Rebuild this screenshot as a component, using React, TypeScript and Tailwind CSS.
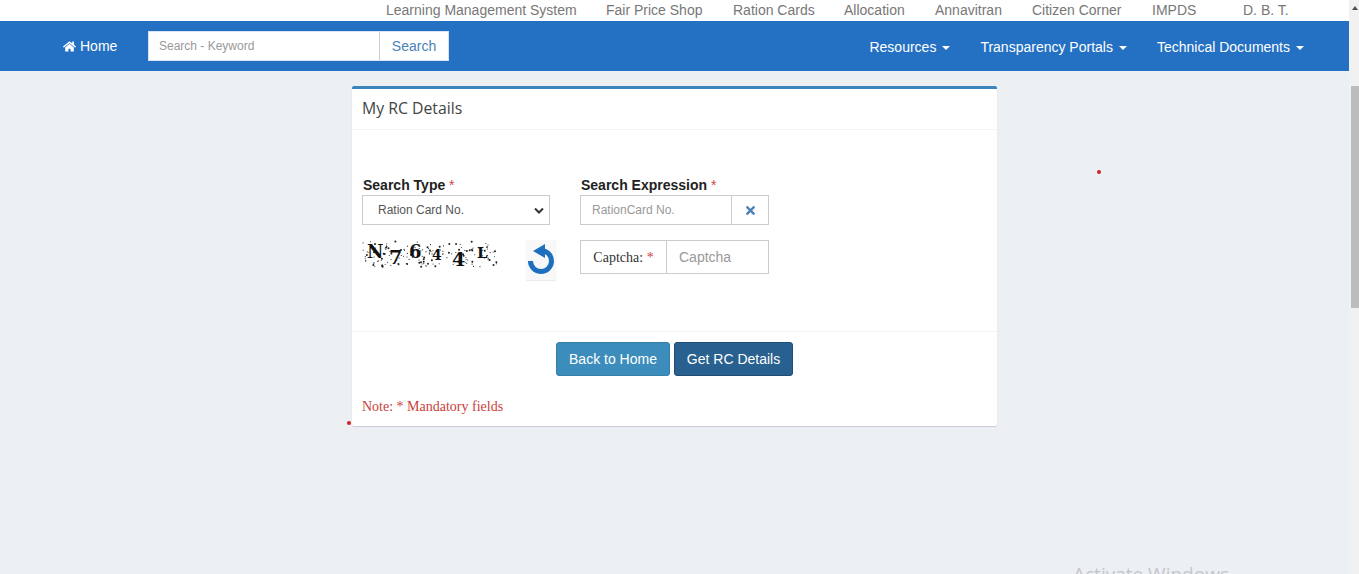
import React from 'react'
import { FaHome, FaTimes } from 'react-icons/fa'

const topLinks = [
  { label: 'Learning Management System', w: 'w-[190px]' },
  { label: 'Fair Price Shop', w: 'w-[97px]' },
  { label: 'Ration Cards', w: 'w-[81px]' },
  { label: 'Allocation', w: 'w-[61px]' },
  { label: 'Annavitran', w: 'w-[67px]' },
  { label: 'Citizen Corner', w: 'w-[90px]' },
  { label: 'IMPDS', w: 'w-[61px]' },
  { label: 'D. B. T.', w: 'w-[46px]' },
]

// speckle noise for the captcha image
const rand = (n: number) => {
  const v = Math.sin(n * 12.9898) * 43758.5453
  return v - Math.floor(v)
}
const dots = Array.from({ length: 170 }, (_, i) => ({
  x: rand(i + 1) * 134,
  y: rand(i + 200) * 26,
  r: rand(i + 400) > 0.75 ? 1 : 0.55,
}))

function Caret() {
  return <span className="ml-[6px] inline-block align-middle border-x-4 border-t-4 border-x-transparent border-t-white" />
}

function Star() {
  return <span className="font-normal text-[#d0453f]"> *</span>
}

function Captcha() {
  return (
    <svg width="136" height="34" viewBox="0 0 136 34" className="shrink-0">
      {dots.map((d, i) => (
        <circle key={i} cx={d.x + 1} cy={d.y + 1} r={d.r} fill="#222" />
      ))}
      <g fontFamily="'DejaVu Serif', serif" fontWeight="700" fill="#111">
        <text x="5" y="18" fontSize="18">N</text>
        <text x="27" y="24" fontSize="19">7</text>
        <text x="47" y="18" fontSize="18">6</text>
        <text x="70" y="20" fontSize="14">4</text>
        <text x="90" y="26" fontSize="19">4</text>
        <text x="115" y="18" fontSize="15">L</text>
      </g>
    </svg>
  )
}

function RefreshIcon() {
  return (
    <div className="ml-[28px] flex h-[40px] w-[30px] items-center justify-center bg-[#f9f8f8] shadow-[0_1px_1px_rgba(0,0,0,0.08)]">
      <svg width="30" height="40" viewBox="0 0 30 40">
        <path d="M4.5 21 A10.5 10.5 0 1 0 15 10.5" fill="none" stroke="#1f6fbf" strokeWidth="5" />
        <path d="M7 11 L19 4 L19 18 Z" fill="#1f6fbf" />
      </svg>
    </div>
  )
}

export default function App() {
  return (
    <div className="relative flex h-screen overflow-hidden bg-[#ecf0f3] font-['Liberation_Sans',Arial,sans-serif]">
      <div className="min-w-0 flex-1">
        <div className="flex h-[21px] items-center bg-white pb-[2px] pl-[386px] text-sm text-[#777]">
          {topLinks.map((l) => (
            <span key={l.label} className={`${l.w} mr-[30px] last:mr-0 whitespace-nowrap`}>
              {l.label}
            </span>
          ))}
        </div>

        <nav className="flex h-[50px] items-center bg-[#2470c2] pl-[63px] pr-[45px] text-sm text-white">
          <a className="flex w-[85px] items-center gap-[4px]">
            <FaHome className="text-[13px]" />
            Home
          </a>
          <div className="flex h-[30px] w-[301px] border border-[#d5e3f2] bg-white text-xs">
            <div className="flex flex-1 items-center pl-[10px] text-[#999]">Search - Keyword</div>
            <div className="flex w-[69px] items-center justify-center border-l border-[#ccc] text-sm text-[#4a83b8]">
              Search
            </div>
          </div>
          <div className="ml-auto mt-[2px] flex gap-[30px]">
            <span>Resources<Caret /></span>
            <span>Transparency Portals<Caret /></span>
            <span>Technical Documents<Caret /></span>
          </div>
        </nav>

        <div className="mx-auto mt-[15px] w-[645px] rounded-[2px] border-t-[3px] border-[#3c85bc] bg-white shadow-[0_1px_1px_rgba(70,60,130,0.2)]">
          <div className="flex h-[41px] items-center border-b border-[#f4f4f4] px-[10px] font-['Open_Sans',sans-serif] text-[15.8px] text-[#444]">
            My RC Details
          </div>

          <div className="h-[201px] px-[10px] pt-[46px]">
            <div className="flex gap-[30px]">
              <div className="w-[188px]">
                <label className="block pl-[1px] text-sm font-bold leading-[19px] text-[#222]">
                  Search Type<Star />
                </label>
                <div className="flex h-[30px] items-center justify-between border border-[#ccc] pl-[15px] pr-[5px] text-xs text-[#555]">
                  Ration Card No.
                  <svg width="10" height="7" viewBox="0 0 10 7">
                    <path d="M1 1.5 L5 5.5 L9 1.5" fill="none" stroke="#333" strokeWidth="2" />
                  </svg>
                </div>
              </div>
              <div className="w-[189px]">
                <label className="block pl-[1px] text-sm font-bold leading-[19px] text-[#222]">
                  Search Expression<Star />
                </label>
                <div className="flex h-[30px] border border-[#ccc] text-xs">
                  <div className="flex flex-1 items-center pl-[11px] text-[#999]">RationCard No.</div>
                  <div className="flex w-[37px] items-center justify-center border-l border-[#ccc] text-[#4a83b8]">
                    <FaTimes className="text-[13px]" />
                  </div>
                </div>
              </div>
            </div>

            <div className="mt-[15px] flex items-start gap-[30px]">
              <div className="flex w-[188px] items-start">
                <Captcha />
                <RefreshIcon />
              </div>
              <div className="flex h-[34px] w-[189px] border border-[#ccc]">
                <div className="w-[86px] border-r border-[#ccc] text-center font-['Liberation_Serif',serif] text-sm leading-[33px] text-[#333]">
                  Captcha:<Star />
                </div>
                <div className="flex flex-1 items-center pl-[12px] text-sm text-[#999]">Captcha</div>
              </div>
            </div>
          </div>

          <div className="border-t border-[#f4f4f4] pt-[10px]">
            <div className="flex justify-center gap-[4px] text-sm text-white">
              <a className="flex h-[34px] w-[114px] items-center justify-center rounded-[3px] border border-[#367fa9] bg-[#3c8dbc]">
                Back to Home
              </a>
              <a className="flex h-[34px] w-[119px] items-center justify-center rounded-[3px] border border-[#204d74] bg-[#286090]">
                Get RC Details
              </a>
            </div>
            <p className="px-[10px] pb-[11px] pt-[23px] font-['Liberation_Serif',serif] text-sm leading-[16px] text-[#c9403a]">
              Note: * Mandatory fields
            </p>
          </div>
        </div>
      </div>

      <div className="flex w-[10px] shrink-0 flex-col bg-[#f1f1f1] pl-[2px]">
        <div className="flex h-[15px] items-center justify-center">
          <span className="border-x-[3px] border-b-[4px] border-x-transparent border-b-[#505050]" />
        </div>
        <div className="mt-[71px] h-[222px] bg-[#bcbcbc]" />
      </div>

      <span className="absolute left-[1097px] top-[170px] h-[4px] w-[4px] rounded-full bg-[#d01f2a]" />
      <span className="absolute left-[347px] top-[421px] h-[4px] w-[4px] rounded-full bg-[#d01f2a]" />
      <span className="absolute left-[1073px] top-[561px] font-['Open_Sans',sans-serif] text-[19px] leading-[27px] text-[#c3c7cb]">
        Activate Windows
      </span>
    </div>
  )
}
